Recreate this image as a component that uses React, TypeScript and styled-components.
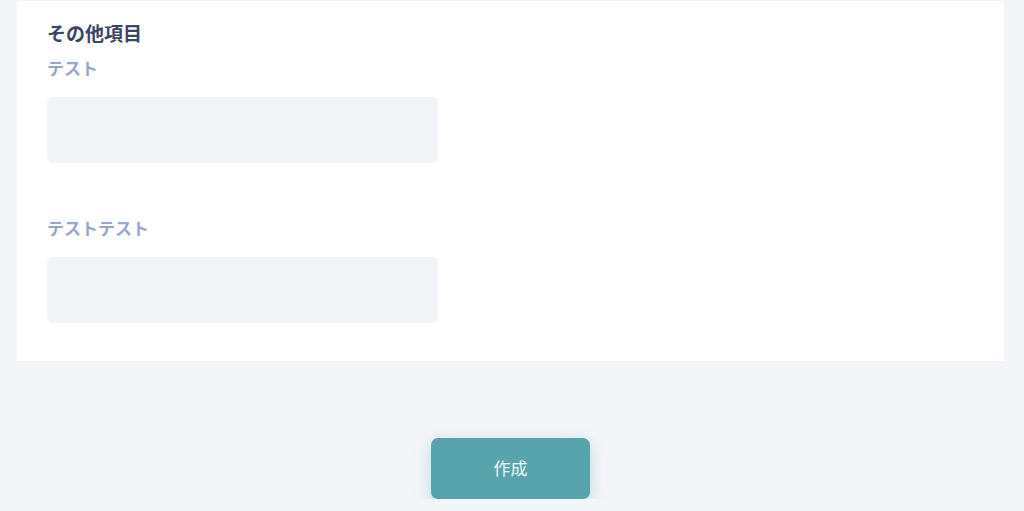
import React from "react";
import styled, { createGlobalStyle } from "styled-components";

const GlobalStyle = createGlobalStyle`
  html, body {
    margin: 0;
    padding: 0;
    background: #f4f5f9;
    font-family: "Noto Sans CJK JP", "Noto Sans", sans-serif;
  }
`;

const Page = styled.div`
  padding: 1px 20px 0 17px;
  display: flex;
  flex-direction: column;
`;

const Card = styled.section`
  background: #ffffff;
  padding: 18px 30px 38px;
  display: flex;
  flex-direction: column;
`;

const Title = styled.h2`
  margin: 0;
  font-size: 19px;
  line-height: 28px;
  font-weight: 700;
  color: #3c4563;
`;

const Field = styled.div<{ $gap: number }>`
  display: flex;
  flex-direction: column;
  margin-top: ${(p) => p.$gap}px;
`;

const Label = styled.label`
  font-size: 17px;
  line-height: 24px;
  font-weight: 700;
  color: #96a8ca;
`;

const Input = styled.input`
  margin-top: 17px;
  width: 391px;
  height: 66px;
  box-sizing: border-box;
  border: none;
  border-radius: 6px;
  background: #f3f4f7;
  padding: 0 16px;
  font-size: 16px;
  outline: none;
`;

const Actions = styled.div`
  display: flex;
  justify-content: center;
  padding-top: 77px;
`;

const SubmitButton = styled.button`
  width: 159px;
  height: 61px;
  border: none;
  border-radius: 7px;
  background: #58a4ac;
  color: #eef6f7;
  font-family: "Noto Sans CJK JP", "Noto Sans", sans-serif;
  font-size: 17px;
  line-height: 24px;
  padding: 0 0 2px;
  box-shadow: 0 4px 16px rgba(88, 164, 172, 0.35);
  cursor: pointer;
`;

export default function App() {
  return (
    <>
      <GlobalStyle />
      <Page>
        <Card>
          <Title>その他項目</Title>
          <Field $gap={9}>
            <Label>テスト</Label>
            <Input />
          </Field>
          <Field $gap={53}>
            <Label>テストテスト</Label>
            <Input />
          </Field>
        </Card>
        <Actions>
          <SubmitButton>作成</SubmitButton>
        </Actions>
      </Page>
    </>
  );
}
